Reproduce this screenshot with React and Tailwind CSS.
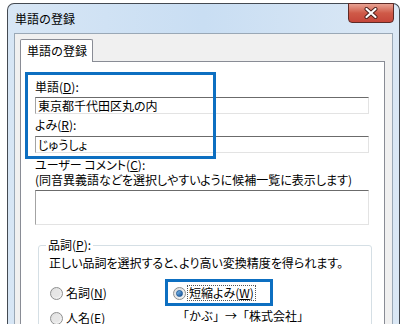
import React from "react";

const font = {
  fontFamily: '"Noto Sans CJK JP", "Noto Sans", sans-serif',
};

function Field({ value, h = "h-[17px]" }) {
  return (
    <div
      className={`w-[334px] ${h} border border-t-[#6b6b6b] border-l-[#a3a3a3] border-r-[#e3e3e3] border-b-[#e3e3e3] bg-white pl-[2px] text-[12px] leading-[15px]`}
    >
      {value}
    </div>
  );
}

function Radio({ checked }) {
  return (
    <span className="w-[13px] h-[13px] rounded-full border border-[#8e8f8f] bg-gradient-to-br from-[#dcdcdc] to-[#f6f6f6] flex items-center justify-center shrink-0">
      {checked ? (
        <span className="w-[7px] h-[7px] rounded-full bg-gradient-to-br from-[#86c5f3] to-[#0d4d95] border border-[#1c5a9a]" />
      ) : (
        <span className="w-[7px] h-[7px] rounded-full bg-[#e6e6e6]" />
      )}
    </span>
  );
}

export default function App() {
  return (
    <div
      className="w-[405px] h-[324px] overflow-hidden bg-white pl-[7px] pt-[3px] text-black [font-feature-settings:'palt']"
      style={font}
    >
      {/* window */}
      <div className="w-[393px] h-[340px] rounded-t-[7px] border-x border-t border-[#444a52] bg-gradient-to-r from-[#d7e6f5] via-[#c9def3] to-[#dbe8f5] flex flex-col">
        {/* title bar */}
        <div className="h-[29px] flex items-start justify-between pl-[7px] pr-[5px]">
          <span className="text-[12px] leading-[28px] mt-[1px] [font-feature-settings:normal]">単語の登録</span>
          <div className="w-[46px] h-[20px] -mt-px rounded-b-[4px] border border-[#5e2a26] bg-gradient-to-b from-[#e8a293] via-[#cf5a48] to-[#c5463a] flex items-center justify-center">
            <svg width="16" height="12" viewBox="0 0 16 12">
              <path d="M3.5 2 L12.5 10 M12.5 2 L3.5 10" stroke="#4a1e1a" strokeWidth="4" strokeLinecap="round" />
              <path d="M3.5 2 L12.5 10 M12.5 2 L3.5 10" stroke="#ffffff" strokeWidth="2.2" strokeLinecap="round" />
            </svg>
          </div>
        </div>

        {/* frame + client */}
        <div className="flex-1 pl-[6px] pr-[6px] flex">
          <div className="flex-1 border-x border-t border-[#9aa8b6] bg-[#f0f0f0] pl-[5px] pt-[5px] flex flex-col">
            {/* tab */}
            <div className="w-[73px] h-[23px] -mb-px relative z-10 border-x border-t border-[#898c95] bg-white pl-[6px] text-[12px] leading-[22px] rounded-t-[2px] [font-feature-settings:normal]">
              単語の登録
            </div>
            {/* tab page */}
            <div className="w-[365px] flex-1 relative border border-[#898c95] bg-white pl-[14px] text-[12px]">
              <div className="mt-[18px] h-[14px] leading-[14px]">
                単語(<span className="underline">D</span>):
              </div>
              <div className="mt-[3px]">
                <Field value="東京都千代田区丸の内" />
              </div>
              <div className="mt-[4px] h-[14px] leading-[14px]">
                よみ(<span className="underline">R</span>):
              </div>
              <div className="mt-[4px]">
                <Field value="じゅうしょ" />
              </div>
              <div className="mt-[4px] h-[15px] leading-[15px]">
                ユーザー コメント(<span className="underline">C</span>):
              </div>
              <div className="h-[15px] leading-[15px]">
                (同音異義語などを選択しやすいように候補一覧に表示します)
              </div>
              <div className="mt-[3px]">
                <Field value="" h="h-[35px]" />
              </div>

              {/* group box */}
              <div className="mt-[20px] ml-[3px] w-[334px] h-[100px] relative border border-[#d5dfe5] rounded-[3px] pl-[10px] pt-[10px]">
                <div className="absolute -top-[8px] left-[7px] bg-white px-[2px] h-[14px] leading-[14px]">
                  品詞(<span className="underline">P</span>):
                </div>
                <div className="h-[14px] leading-[14px]">
                  正しい品詞を選択すると、より高い変換精度を得られます。
                </div>
                <div className="mt-[16px] flex">
                  <div className="w-[123px] ml-[1px] flex flex-col gap-[11px]">
                    <div className="flex items-center gap-[3px] h-[14px] leading-[14px]">
                      <Radio />
                      <span>
                        名詞(<span className="underline">N</span>)
                      </span>
                    </div>
                    <div className="flex items-center gap-[3px] h-[14px] leading-[14px]">
                      <Radio />
                      <span>
                        人名(<span className="underline">E</span>)
                      </span>
                    </div>
                  </div>
                  <div className="flex flex-col">
                    <div className="flex items-center gap-[1px] h-[14px]">
                      <Radio checked />
                      <span className="border border-dotted border-[#555] px-[1px] leading-[14px]">
                        短縮よみ(<span className="underline">W</span>)
                      </span>
                    </div>
                    <div className="mt-[9px] ml-[4px] h-[14px] leading-[14px] [font-feature-settings:normal]">
                      「かぶ」→「株式会社」
                    </div>
                  </div>
                </div>
              </div>

              {/* highlight boxes */}
              <div className="absolute left-[4px] top-[10px] w-[191px] h-[87px] border-[3px] border-[#0d6fc1]" />
              <div className="absolute left-[144px] top-[217px] w-[108px] h-[27px] border-[3px] border-[#0d6fc1]" />
            </div>
          </div>
        </div>
      </div>
    </div>
  );
}
